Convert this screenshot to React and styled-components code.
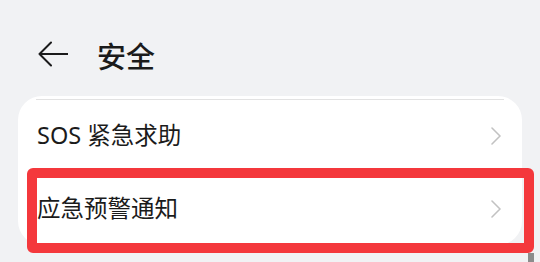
import React from "react";
import styled, { createGlobalStyle } from "styled-components";

const GlobalStyle = createGlobalStyle`
  html, body {
    margin: 0;
    padding: 0;
    background: #f1f2f4;
  }
  body {
    font-family: "Noto Sans", "Noto Sans CJK SC", sans-serif;
    color: #1b1b1b;
  }
`;

const Page = styled.div`
  position: relative;
  width: 540px;
  height: 262px;
  overflow: hidden;
  background: #f1f2f4;
`;

const Header = styled.div`
  height: 84px;
  margin-top: 12px;
  padding-left: 38px;
  display: flex;
  align-items: center;
  gap: 29px;
`;

const Title = styled.div`
  font-family: "Noto Sans CJK SC", sans-serif;
  font-size: 29px;
  font-weight: 500;
  line-height: 1;
  margin-top: 3px;
`;

const Card = styled.div`
  margin: 0 18px;
  background: #fff;
  border-radius: 24px;
  padding-top: 3px;
`;

const Divider = styled.div`
  height: 1px;
  margin: 0 18px;
  background: #e2e2e2;
`;

const Row = styled.div`
  height: 72px;
  display: flex;
  align-items: center;
  justify-content: space-between;
  padding: 0 21px 0 19px;
`;

const Label = styled.span`
  font-family: "Noto Sans", "Noto Sans CJK SC", sans-serif;
  font-size: 23.5px;
  line-height: 1;
`;

const Highlight = styled.div`
  position: absolute;
  left: 27px;
  top: 168px;
  width: 507px;
  height: 85px;
  box-sizing: border-box;
  border: 10px solid #f4383c;
  border-radius: 6px;
  pointer-events: none;
`;

const Strip = styled.div`
  position: absolute;
  left: 528px;
  top: 253px;
  width: 6px;
  height: 9px;
  background: #8c8c8c;
`;

const BackArrow = () => (
  <svg width="30" height="26" viewBox="0 0 30 26" fill="none">
    <path
      d="M1.5 13H30M13 1.5L1.5 13L13 24.5"
      stroke="#1b1b1b"
      strokeWidth="2"
      strokeLinecap="round"
      strokeLinejoin="round"
    />
  </svg>
);

const Chevron = () => (
  <svg width="10" height="18" viewBox="0 0 10 18" fill="none">
    <path
      d="M1 1L9 9L1 17"
      stroke="#c2c2c2"
      strokeWidth="1.6"
      strokeLinecap="round"
      strokeLinejoin="round"
    />
  </svg>
);

const items = ["SOS 紧急求助", "应急预警通知"];

export default function App() {
  return (
    <Page>
      <GlobalStyle />
      <Header>
        <BackArrow />
        <Title>安全</Title>
      </Header>
      <Card>
        {items.map((label) => (
          <React.Fragment key={label}>
            <Divider />
            <Row>
              <Label>{label}</Label>
              <Chevron />
            </Row>
          </React.Fragment>
        ))}
      </Card>
      <Highlight />
      <Strip />
    </Page>
  );
}
